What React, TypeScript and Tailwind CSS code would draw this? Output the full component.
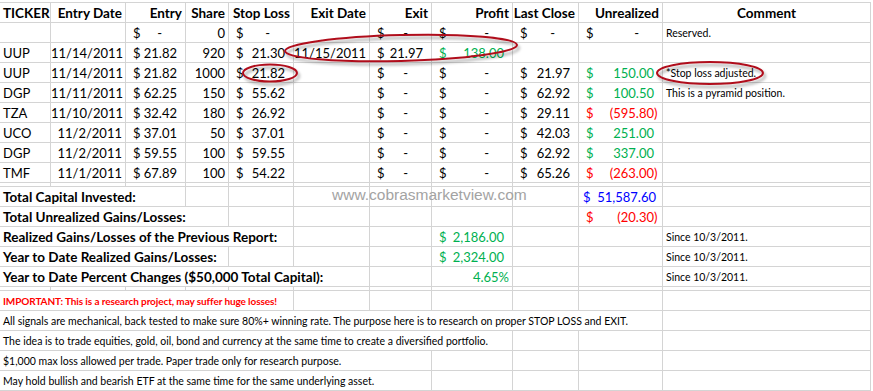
import React from 'react';

const widths = [51, 75, 60, 43, 65, 76, 62, 81, 66, 84, 208];

type Tone = 'black' | 'green' | 'red' | 'blue';

const toneClass: Record<Tone, string> = {
  black: 'text-black',
  green: 'text-[#00b050]',
  red: 'text-[#ff0000]',
  blue: 'text-[#0000ff]',
};

const td = 'border border-[#d4d4d4] p-0 align-bottom overflow-hidden whitespace-nowrap';

function Txt({ children, align = 'right', className = '', span = 1 }: { children?: React.ReactNode; align?: 'left' | 'right' | 'center'; className?: string; span?: number }) {
  const a = align === 'left' ? 'text-left pl-[3px]' : align === 'center' ? 'text-center' : 'text-right pr-[3px]';
  return (
    <td colSpan={span} className={`${td} ${a} ${className}`}>
      {children}
    </td>
  );
}

function Money({ v, tone = 'black', tight = false }: { v: string; tone?: Tone; tight?: boolean }) {
  const neg = v.startsWith('(');
  const dash = v === '-';
  return (
    <td className={`${td} ${toneClass[tone]}`}>
      <div className={`flex items-end justify-between gap-[3px] ${tight ? 'pl-[4px]' : 'pl-[7px]'}`}>
        <span>$</span>
        <span className="flex">
          <span>{neg ? v.slice(0, -1) : v}</span>
          {dash && <span className="w-[15px]" />}
          <span className={`box-content text-left ${tight ? 'w-[2px] pr-[4px]' : 'w-[4px] pr-[4px]'}`}>{neg ? ')' : ''}</span>
        </span>
      </div>
    </td>
  );
}

function Empty({ n = 1 }: { n?: number }) {
  return (
    <>
      {Array.from({ length: n }).map((_, i) => (
        <td key={i} className={td} />
      ))}
    </>
  );
}

type Pos = {
  t: string;
  date: string;
  entry: string;
  share: string;
  stop: string;
  last: string;
  unr: string;
  tone: Tone;
  note?: string;
};

const positions: Pos[] = [
  { t: 'UUP', date: '11/14/2011', entry: '21.82', share: '1000', stop: '21.82', last: '21.97', unr: '150.00', tone: 'green', note: '*Stop loss adjusted.' },
  { t: 'DGP', date: '11/11/2011', entry: '62.25', share: '150', stop: '55.62', last: '62.92', unr: '100.50', tone: 'green', note: 'This is a pyramid position.' },
  { t: 'TZA', date: '11/10/2011', entry: '32.42', share: '180', stop: '26.92', last: '29.11', unr: '(595.80)', tone: 'red' },
  { t: 'UCO', date: '11/2/2011', entry: '37.01', share: '50', stop: '37.01', last: '42.03', unr: '251.00', tone: 'green' },
  { t: 'DGP', date: '11/2/2011', entry: '59.55', share: '100', stop: '59.55', last: '62.92', unr: '337.00', tone: 'green' },
  { t: 'TMF', date: '11/1/2011', entry: '67.89', share: '100', stop: '54.22', last: '65.26', unr: '(263.00)', tone: 'red' },
];

const small = 'text-[10.5px]';
const label = 'font-bold text-[13.5px]';

function Gap() {
  return (
    <tr className="h-[4px]">
      <Empty n={11} />
    </tr>
  );
}

export default function App() {
  return (
    <div className="relative w-[873px] h-[391px] overflow-hidden bg-white pt-[2px] font-['Lato',sans-serif] text-[13px] leading-[17px] text-black">
      <table className="table-fixed border-collapse w-[871px] ml-[-1px]">
        <colgroup>
          {widths.map((w, i) => (
            <col key={i} style={{ width: w }} />
          ))}
        </colgroup>
        <tbody>
          <tr className={`h-[20px] ${label}`}>
            <Txt align="left">TICKER</Txt>
            <Txt>Entry Date</Txt>
            <Txt>Entry</Txt>
            <Txt>Share</Txt>
            <Txt>Stop Loss</Txt>
            <Txt>Exit Date</Txt>
            <Txt>Exit</Txt>
            <Txt>Profit</Txt>
            <Txt>Last Close</Txt>
            <Txt>Unrealized</Txt>
            <Txt align="center">Comment</Txt>
          </tr>
          <tr className="h-[20px]">
            <Empty n={2} />
            <Money v="-" />
            <Txt>0</Txt>
            <Money v="-" />
            <Empty />
            <Money v="-" />
            <Money v="-" />
            <Money v="-" />
            <Money v="-" />
            <Txt align="left" className={small}>Reserved.</Txt>
          </tr>
          <tr className="h-[20px]">
            <Txt align="left">UUP</Txt>
            <Txt>11/14/2011</Txt>
            <Money v="21.82" />
            <Txt>920</Txt>
            <Money v="21.30" />
            <Txt>11/15/2011</Txt>
            <Money v="21.97" />
            <Money v="138.00" tone="green" />
            <Empty n={3} />
          </tr>
          {positions.map((p, i) => (
            <tr key={i} className="h-[20px]">
              <Txt align="left">{p.t}</Txt>
              <Txt>{p.date}</Txt>
              <Money v={p.entry} />
              <Txt>{p.share}</Txt>
              <Money v={p.stop} />
              <Empty />
              <Money v="-" />
              <Money v="-" />
              <Money v={p.last} />
              <Money v={p.unr} tone={p.tone} />
              <Txt align="left" className={small}>{p.note}</Txt>
            </tr>
          ))}
          <Gap />
          <tr className="h-[20px]">
            <Txt align="left" span={3} className={label}>Total Capital Invested:</Txt>
            <Empty n={6} />
            <Money v="51,587.60" tone="blue" tight />
            <Empty />
          </tr>
          <tr className="h-[20px]">
            <Txt align="left" span={4} className={label}>Total Unrealized Gains/Losses:</Txt>
            <Empty n={5} />
            <Money v="(20.30)" tone="red" />
            <Empty />
          </tr>
          <tr className="h-[20px]">
            <Txt align="left" span={5} className={label}>Realized Gains/Losses of the Previous Report:</Txt>
            <Empty n={2} />
            <Money v="2,186.00" tone="green" />
            <Empty n={2} />
            <Txt align="left" className={small}>Since 10/3/2011.</Txt>
          </tr>
          <tr className="h-[20px]">
            <Txt align="left" span={4} className={label}>Year to Date Realized Gains/Losses:</Txt>
            <Empty n={3} />
            <Money v="2,324.00" tone="green" />
            <Empty n={2} />
            <Txt align="left" className={small}>Since 10/3/2011.</Txt>
          </tr>
          <tr className="h-[20px]">
            <Txt align="left" span={6} className={label}>Year to Date Percent Changes ($50,000 Total Capital):</Txt>
            <Empty />
            <Txt className="text-[#00b050]">4.65%</Txt>
            <Empty n={2} />
            <Txt align="left" className={small}>Since 10/3/2011.</Txt>
          </tr>
          <Gap />
          <tr className="h-[20px]">
            <Txt align="left" span={5} className="text-[10px] tracking-[-0.1px] font-bold text-[#ff0000]">IMPORTANT: This is a research project, may suffer huge losses!</Txt>
            <Empty n={6} />
          </tr>
          <tr className="h-[20px]">
            <Txt align="left" span={10} className={small}>All signals are mechanical, back tested to make sure 80%+ winning rate. The purpose here is to research on proper STOP LOSS and EXIT.</Txt>
            <Empty />
          </tr>
          <tr className="h-[20px]">
            <Txt align="left" span={8} className={small}>The idea is to trade equities, gold, oil, bond and currency at the same time to create a diversified portfolio.</Txt>
            <Empty n={3} />
          </tr>
          <tr className="h-[20px]">
            <Txt align="left" span={7} className={small}>$1,000 max loss allowed per trade. Paper trade only for research purpose.</Txt>
            <Empty n={4} />
          </tr>
          <tr className="h-[20px]">
            <Txt align="left" span={7} className={small}>May hold bullish and bearish ETF at the same time for the same underlying asset.</Txt>
            <Empty n={4} />
          </tr>
        </tbody>
      </table>

      <div className="absolute left-[332px] top-[186px] font-['Liberation_Sans',Arial,sans-serif] text-[15.5px] text-[#a3a3a3] pointer-events-none">
        www.cobrasmarketview.com
      </div>

      <svg className="absolute left-0 top-0 pointer-events-none" width="873" height="391">
        <defs>
          <filter id="sh" x="-20%" y="-50%" width="140%" height="200%">
            <feDropShadow dx="2" dy="3" stdDeviation="1.5" floodColor="#000" floodOpacity="0.35" />
          </filter>
        </defs>
        <g fill="none" stroke="#b0101c" strokeWidth="2" filter="url(#sh)">
          <ellipse cx="401" cy="48" rx="116" ry="13" transform="rotate(-1.5 401 48)" />
          <ellipse cx="270" cy="73" rx="27" ry="8.5" />
          <ellipse cx="710" cy="73" rx="53" ry="11" />
        </g>
      </svg>
    </div>
  );
}
